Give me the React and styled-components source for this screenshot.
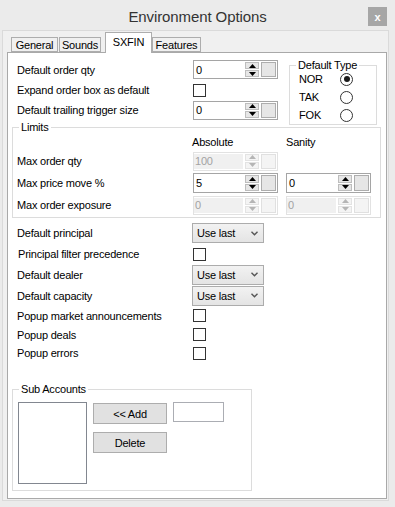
import React from 'react';
import styled, { createGlobalStyle } from 'styled-components';

const Global = createGlobalStyle`
  html, body { margin: 0; padding: 0; background: #ebebeb; }
  body {
    font-family: "Liberation Sans", Arial, sans-serif;
    font-size: 11px;
    letter-spacing: -0.2px;
    color: #000;
  }
  * { box-sizing: border-box; }
`;

const Window = styled.div`
  width: 395px;
  height: 507px;
  background: #ebebeb;
  display: flex;
  flex-direction: column;
  overflow: hidden;
`;

const TitleBar = styled.div`
  height: 30px;
  display: grid;
  grid-template-columns: 1fr auto 1fr;
  align-items: center;
`;

const Title = styled.div`
  grid-column: 2;
  font-size: 15px;
  letter-spacing: -0.1px;
  color: #333;
  padding-top: 3px;
`;

const Close = styled.div`
  grid-column: 3;
  justify-self: end;
  margin: 3px 8px 0 0;
  width: 19px;
  height: 19px;
  background: #a6a6a6;
  color: #fff;
  font-weight: bold;
  font-size: 11px;
  display: flex;
  align-items: center;
  justify-content: center;
`;

const Panel = styled.div`
  margin-left: 2px;
  width: 387px;
  height: 471px;
  border: 1px solid #dadada;
  background: #f0f0f0;
  padding: 0 0 0 4px;
`;

const TabStrip = styled.div`
  display: flex;
  align-items: flex-end;
  height: 22px;
  padding-left: 4px;
  margin-bottom: -1px;
  position: relative;
  z-index: 1;
`;

const Tab = styled.div`
  width: ${p => p.$w}px;
  height: ${p => (p.$active ? 21 : 15)}px;
  margin: ${p => (p.$active ? '0 0 0 3px' : '0 1px 1px 0')};
  border: 1px solid #adadad;
  border-bottom: ${p => (p.$active ? 'none' : '1px solid #adadad')};
  background: ${p => (p.$active ? '#fff' : '#f0f0f0')};
  display: flex;
  align-items: ${p => (p.$active ? 'flex-start' : 'center')};
  padding-top: ${p => (p.$active ? '3px' : '0')};
  justify-content: center;
  font-size: 11px;
`;

const Page = styled.div`
  width: 380px;
  height: 447px;
  border: 1px solid #a9a9a9;
  background: #fff;
  padding: 6px 0 0 4px;
  display: flex;
  flex-direction: column;
`;

const TopSection = styled.div`
  display: flex;
  align-items: flex-start;
  padding-left: 5px;
`;

const FormGrid = styled.div`
  display: grid;
  grid-template-columns: ${p => p.$cols || '176px auto'};
  grid-template-rows: ${p => p.$rows};
  align-items: center;
  justify-items: start;
`;

const Label = styled.span`
  white-space: nowrap;
  padding-left: ${p => p.$indent || 0}px;
`;

const Header = styled.span`
  margin-left: -1px;
`;

const Group = styled.fieldset`
  margin: ${p => p.$m || '0'};
  width: ${p => p.$w}px;
  padding: 0;
  border: 1px solid #dcdcdc;
  min-width: 0;
`;

const Legend = styled.legend`
  margin-left: 6px;
  padding: 0 2px;
  line-height: 14px;
  font-size: 11px;
`;

const RadioGrid = styled.div`
  display: grid;
  grid-template-columns: 41px 13px;
  grid-auto-rows: 18px;
  align-items: center;
  margin: -2px 0 0 9px;
`;

const Radio = styled.span`
  width: 13px;
  height: 13px;
  border: 1px solid #333;
  border-radius: 50%;
  background: #fff;
  display: flex;
  align-items: center;
  justify-content: center;
  &::after {
    content: "";
    width: 6px;
    height: 6px;
    border-radius: 50%;
    background: ${p => (p.$on ? '#1a1a1a' : 'transparent')};
  }
`;

const Checkbox = styled.span`
  width: 13px;
  height: 13px;
  border: 1px solid #333;
  background: #fff;
`;

const GroupInner = styled.div`
  padding: ${p => p.$pad};
`;

const SpinBox = styled.div`
  display: flex;
  width: 85px;
  height: ${p => p.$h || 19}px;
  border: 1px solid ${p => (p.$disabled ? '#e2e2e2' : '#a5a5a5')};
  background: #fff;
`;

const SpinField = styled.div`
  flex: 1;
  display: flex;
  align-items: center;
  padding-left: ${p => (p.$disabled ? 1 : 2)}px;
  margin: ${p => (p.$disabled ? '1px 2px 1px 0' : '0')};
  background: ${p => (p.$disabled ? '#f0f0f0' : '#fff')};
  color: ${p => (p.$disabled ? '#a3a3a3' : '#000')};
`;

const SpinButtons = styled.div`
  width: 14px;
  margin: 1px 0;
  display: flex;
  flex-direction: column;
  gap: 1px;
`;

const SpinHalf = styled.div`
  flex: 1;
  background: ${p => (p.$disabled ? '#f4f4f4' : '#e6e6e6')};
  border: 1px solid ${p => (p.$disabled ? '#e3e3e3' : '#bdbdbd')};
  display: flex;
  align-items: center;
  justify-content: center;
`;

const Square = styled.div`
  width: 15px;
  margin: 1px 1px 1px 2px;
  border: 1px solid ${p => (p.$disabled ? '#e0e0e0' : '#adadad')};
  background: ${p => (p.$disabled ? '#f4f4f4' : '#e6e6e6')};
`;

const Arrow = ({ up, color }) => (
  <svg width="7" height="4" viewBox="0 0 7 4">
    <polygon points={up ? '0,4 7,4 3.5,0' : '0,0 7,0 3.5,4'} fill={color} />
  </svg>
);

const Spinner = ({ value, disabled, h }) => {
  const c = disabled ? '#b5b5b5' : '#000';
  return (
    <SpinBox $disabled={disabled} $h={h}>
      <SpinField $disabled={disabled}>{value}</SpinField>
      <SpinButtons>
        <SpinHalf $disabled={disabled}><Arrow up color={c} /></SpinHalf>
        <SpinHalf $disabled={disabled}><Arrow color={c} /></SpinHalf>
      </SpinButtons>
      <Square $disabled={disabled} />
    </SpinBox>
  );
};

const SelectBox = styled.div`
  width: 72px;
  height: 20px;
  margin-left: -1px;
  border: 1px solid #acacac;
  background: linear-gradient(#f2f2f2, #e4e4e4);
  display: flex;
  align-items: center;
  justify-content: space-between;
  padding: 0 5px 0 4px;
`;

const Select = ({ value }) => (
  <SelectBox>
    <span>{value}</span>
    <svg width="7" height="5" viewBox="0 0 7 5">
      <polyline points="0.5,0.8 3.5,3.8 6.5,0.8" fill="none" stroke="#555" strokeWidth="1.4" />
    </svg>
  </SelectBox>
);

const BottomSection = styled.div`
  margin-top: 4px;
  padding-left: 5px;
`;

const SubRow = styled.div`
  display: flex;
  align-items: flex-start;
`;

const ListBox = styled.div`
  width: 69px;
  height: 82px;
  border: 1px solid #828790;
  background: #fff;
`;

const ButtonCol = styled.div`
  display: flex;
  flex-direction: column;
  gap: 8px;
  margin: 1px 0 0 6px;
`;

const Button = styled.button`
  width: 74px;
  height: 21px;
  border: 1px solid #adadad;
  background: #e1e1e1;
  font: inherit;
  letter-spacing: inherit;
  padding: 0;
  color: #000;
`;

const TextBox = styled.div`
  width: 51px;
  height: 20px;
  margin-left: 6px;
  border: 1px solid #abadb3;
  background: #fff;
`;

export default function App() {
  return (
    <>
      <Global />
      <Window>
        <TitleBar>
          <Title>Environment Options</Title>
          <Close>x</Close>
        </TitleBar>
        <Panel>
          <TabStrip>
            <Tab $w={47}>General</Tab>
            <Tab $w={42}>Sounds</Tab>
            <Tab $w={47} $active>SXFIN</Tab>
            <Tab $w={49}>Features</Tab>
          </TabStrip>
          <Page>
            <TopSection>
              <FormGrid $rows="21px 20px 20px" $cols="176px 85px">
                <Label>Default order qty</Label>
                <Spinner value="0" />
                <Label>Expand order box as default</Label>
                <Checkbox />
                <Label>Default trailing trigger size</Label>
                <Spinner value="0" />
              </FormGrid>
              <Group $w={88} $m="-1px 0 -5px 11px">
                <Legend>Default Type</Legend>
                <RadioGrid>
                  <span>NOR</span><Radio $on />
                  <span>TAK</span><Radio />
                  <span>FOK</span><Radio />
                </RadioGrid>
              </Group>
            </TopSection>

            <Group $w={369}>
              <Legend>Limits</Legend>
              <GroupInner $pad="0 0 1px 4px">
                <FormGrid $rows="16px 22px 22px 22px" $cols="176px 93px 85px">
                  <span />
                  <Header>Absolute</Header>
                  <span>Sanity</span>
                  <Label>Max order qty</Label>
                  <Spinner value="100" disabled />
                  <span />
                  <Label>Max price move %</Label>
                  <Spinner value="5" h={20} />
                  <Spinner value="0" h={20} />
                  <Label>Max order exposure</Label>
                  <Spinner value="0" disabled />
                  <Spinner value="0" disabled />
                </FormGrid>
              </GroupInner>
            </Group>

            <BottomSection>
              <FormGrid $rows="22px 20px 21px 21px 19px 19px 18px" $cols="176px auto">
                <Label>Default principal</Label>
                <Select value="Use last" />
                <Label $indent={1}>Principal filter precedence</Label>
                <Checkbox />
                <Label>Default dealer</Label>
                <Select value="Use last" />
                <Label>Default capacity</Label>
                <Select value="Use last" />
                <Label>Popup market announcements</Label>
                <Checkbox />
                <Label>Popup deals</Label>
                <Checkbox />
                <Label>Popup errors</Label>
                <Checkbox />
              </FormGrid>
            </BottomSection>

            <Group $w={240} $m="20px 0 0 0">
              <Legend>Sub Accounts</Legend>
              <GroupInner $pad="6px 0 6px 5px">
                <SubRow>
                  <ListBox />
                  <ButtonCol>
                    <Button>&lt;&lt; Add</Button>
                    <Button>Delete</Button>
                  </ButtonCol>
                  <TextBox />
                </SubRow>
              </GroupInner>
            </Group>
          </Page>
        </Panel>
      </Window>
    </>
  );
}
